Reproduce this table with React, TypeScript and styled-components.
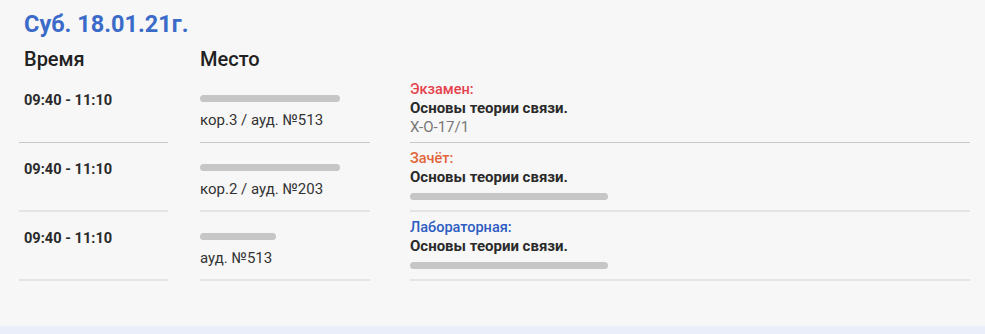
import React from "react";
import styled, { createGlobalStyle } from "styled-components";

const Global = createGlobalStyle`
  html, body { margin: 0; padding: 0; background: #f7f7f7; }
  body { font-family: Roboto, "Noto Sans", sans-serif; color: #333; }
`;

const Page = styled.div`
  height: 334px;
  display: flex;
  flex-direction: column;
  background: #f7f7f7;
`;

const Content = styled.div`
  flex: 1;
  padding: 10px 0 0 19px;
`;

const Footer = styled.div`
  height: 8px;
  background: #e9eefa;
`;

const Title = styled.h1`
  margin: 0 0 0 5px;
  font-size: 23.5px;
  line-height: 28px;
  font-weight: 700;
  color: #3a6bc9;
`;

const Grid = styled.div`
  display: grid;
  grid-template-columns: 149px 170px 568px;
  column-gap: 32px;
  margin-top: 9px;
`;

const Head = styled.div<{ $first?: boolean }>`
  font-size: 20px;
  font-weight: 500;
  line-height: 24px;
  color: #222;
  padding-left: ${(p) => (p.$first ? "5px" : "0")};
  height: 27px;
`;

const Cell = styled.div<{ $strong?: boolean; $pad?: string; $shift?: number }>`
  box-sizing: border-box;
  height: 69px;
  padding: ${(p) => p.$pad || "0"};
  margin-left: ${(p) => p.$shift || 0}px;
  border-bottom: ${(p) => (p.$strong ? "1px solid #c9c9c9" : "2px solid #e4e4e4")};
  display: flex;
  flex-direction: column;
`;

const Time = styled.div`
  font-size: 14.6px;
  font-weight: 700;
  line-height: 17px;
  color: #2a2a2a;
`;

const Blur = styled.span`
  display: block;
  height: 7px;
  border-radius: 4px;
  background: #c6c6c6;
  filter: blur(0.6px);
`;

const BlurLine = styled.div`
  height: 18px;
  display: flex;
  align-items: center;
`;

const PlaceBlur = styled.div`
  height: 14px;
  padding-top: 6px;
  box-sizing: border-box;
`;

const Place = styled.div`
  font-size: 15px;
  line-height: 20px;
  margin-top: 7px;
  color: #333;
`;

const Kind = styled.div<{ $color: string }>`
  font-size: 14.5px;
  line-height: 18px;
  font-weight: 500;
  color: ${(p) => p.$color};
`;

const Subject = styled.div`
  font-size: 15px;
  line-height: 19px;
  font-weight: 700;
  color: #2a2a2a;
`;

const Group = styled.div`
  font-size: 15px;
  line-height: 18px;
  color: #777;
`;

type Row = {
  place: string;
  placeBlur: number;
  kind: string;
  color: string;
  group?: string;
  groupBlur?: number;
};

const rows: Row[] = [
  { place: "кор.3 / ауд. №513", placeBlur: 140, kind: "Экзамен:", color: "#e5414d", group: "Х-О-17/1" },
  { place: "кор.2 / ауд. №203", placeBlur: 140, kind: "Зачёт:", color: "#e2663a", groupBlur: 198 },
  { place: "ауд. №513", placeBlur: 76, kind: "Лабораторная:", color: "#2d5cc2", groupBlur: 198 },
];

export default function App() {
  return (
    <Page>
      <Global />
      <Content>
        <Title>Суб. 18.01.21г.</Title>
        <Grid>
          <Head $first>Время</Head>
          <Head>Место</Head>
          <Head />
          {rows.map((r, i) => (
            <React.Fragment key={i}>
              <Cell $strong={i === 0} $pad="18px 0 0 5px">
                <Time>09:40 - 11:10</Time>
              </Cell>
              <Cell $strong={i === 0} $pad="15px 0 0 0">
                <PlaceBlur>
                  <Blur style={{ width: r.placeBlur }} />
                </PlaceBlur>
                <Place>{r.place}</Place>
              </Cell>
              <Cell $strong={i === 0} $pad="7px 0 0 0" $shift={8}>
                <Kind $color={r.color}>{r.kind}</Kind>
                <Subject>Основы теории связи.</Subject>
                {r.group ? (
                  <Group>{r.group}</Group>
                ) : (
                  <BlurLine>
                    <Blur style={{ width: r.groupBlur }} />
                  </BlurLine>
                )}
              </Cell>
            </React.Fragment>
          ))}
        </Grid>
      </Content>
      <Footer />
    </Page>
  );
}
